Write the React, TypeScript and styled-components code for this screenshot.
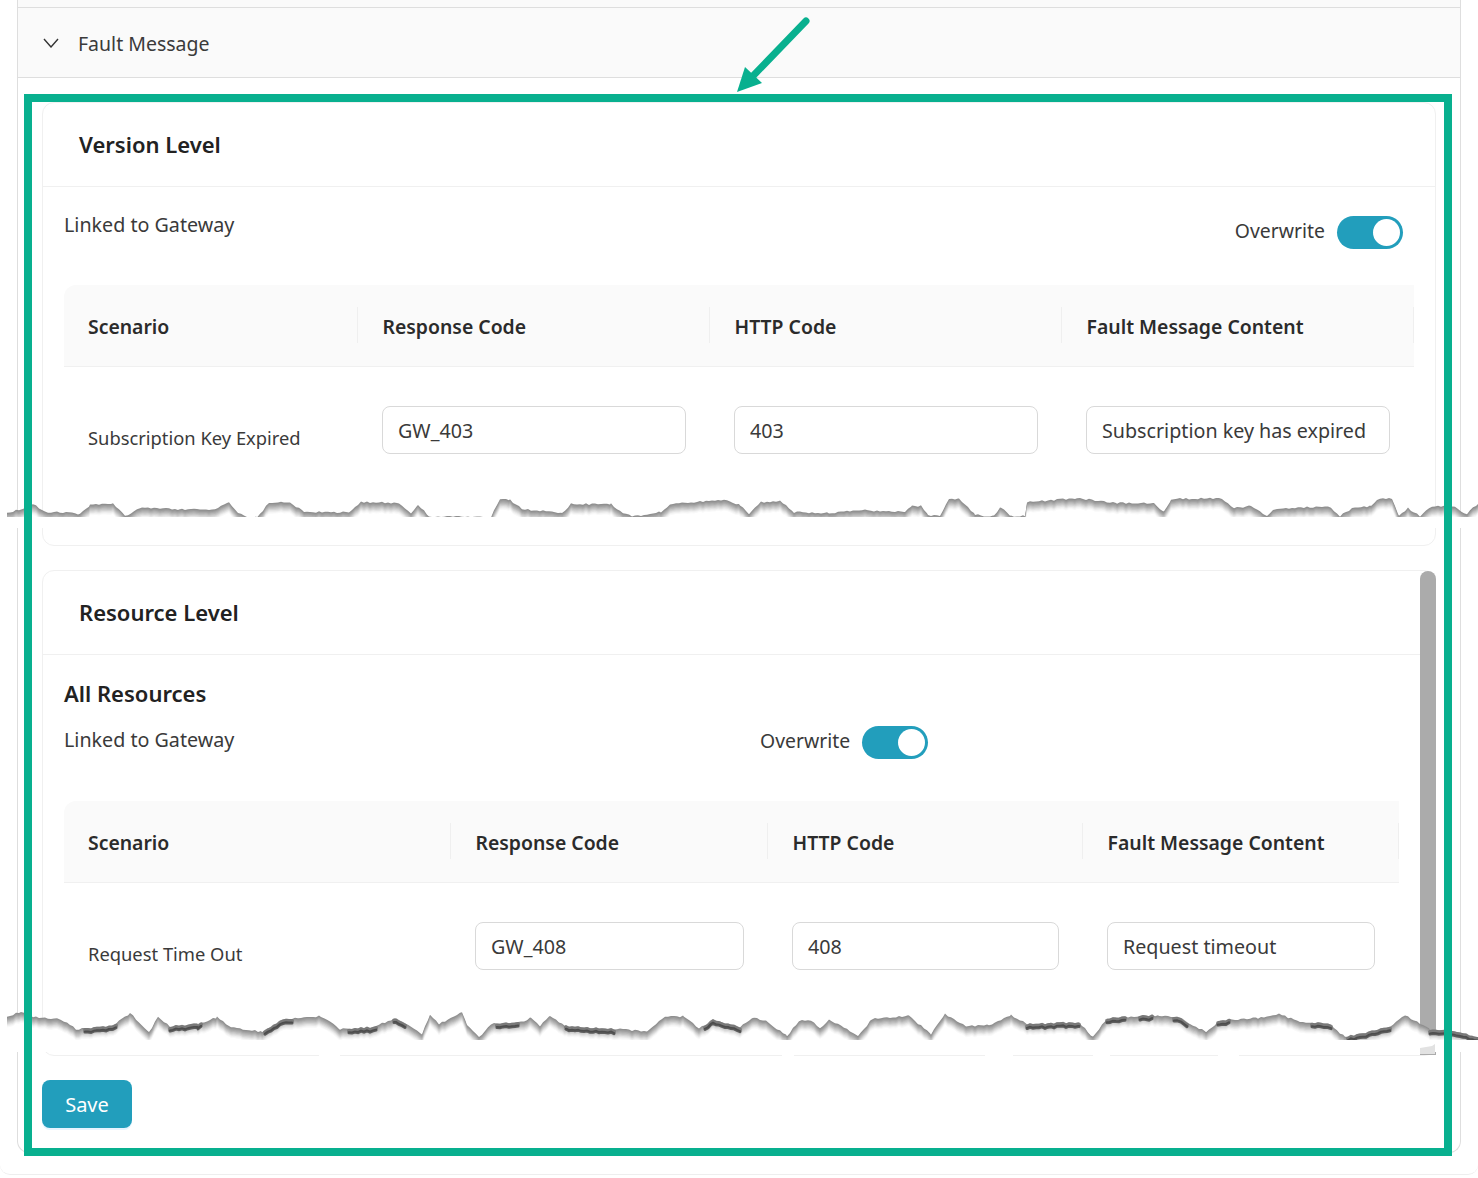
import React from 'react'
import styled, { createGlobalStyle } from 'styled-components'

const GlobalStyle = createGlobalStyle`
    html, body {
        margin: 0;
        padding: 0;
        background: #fff;
    }
    * {
        box-sizing: border-box;
    }
    body {
        font-family: "Noto Sans", "Open Sans", "Liberation Sans", sans-serif;
        color: #3a3a3a;
    }
`

const Page = styled.div`
    position: relative;
    width: 1478px;
    height: 1178px;
    overflow: hidden;
`
const Shell = styled.div`
    height: 1175px;
    border-bottom: 1px solid #eeeeee;
    border-radius: 0 0 10px 10px;
`
const Panel = styled.div`
    width: 1444px;
    height: 1153px;
    margin-left: 17px;
    border: 1px solid #dedede;
    border-top: none;
    border-radius: 0 0 12px 12px;
`
const Sliver = styled.div`
    height: 8px;
    background: #fafafa;
    border-bottom: 1px solid #dedede;
`
const CollapseHeader = styled.div`
    height: 70px;
    padding: 1px 0 0 25px;
    display: flex;
    align-items: center;
    gap: 19px;
    background: #fafafa;
    border-bottom: 1px solid #dedede;
    font-size: 19.5px;
    color: #3a3a3a;
`
const PanelBody = styled.div`
    padding: 24px 24px 0;
    display: flex;
    flex-direction: column;
    gap: 24px;
`
const Card = styled.section<{ $height: number }>`
    position: relative;
    width: 1394px;
    height: ${({ $height }) => $height}px;
    border: 1px solid #f0f0f0;
    border-radius: 12px;
    background: #fff;
`
const CardHeader = styled.div`
    height: 84px;
    padding: 0 36px 2px;
    display: flex;
    align-items: center;
    font-size: 22px;
    font-weight: 600;
    color: #222;
    border-bottom: 1px solid #f0f0f0;
`
const CardBody = styled.div<{ $paddingTop: number }>`
    padding: ${({ $paddingTop }) => $paddingTop}px 21px 0;
`
const SubTitle = styled.div`
    height: 32px;
    margin-bottom: 17px;
    display: flex;
    align-items: center;
    font-size: 22px;
    font-weight: 600;
    color: #222;
`
const LinkRow = styled.div<{ $height: number }>`
    height: ${({ $height }) => $height}px;
    display: flex;
    align-items: flex-start;
`
const LinkLabel = styled.div<{ $width?: number }>`
    width: ${({ $width }) => ($width ? `${$width}px` : 'auto')};
    font-size: 19.7px;
    line-height: 28px;
    color: #3a3a3a;
`
const Overwrite = styled.div<{ $right?: number; $top: number }>`
    display: flex;
    align-items: center;
    gap: 12px;
    margin-top: ${({ $top }) => $top}px;
    margin-left: ${({ $right }) => ($right === undefined ? '0' : 'auto')};
    margin-right: ${({ $right }) => $right ?? 0}px;
    font-size: 19.4px;
    color: #3a3a3a;
`
const OverwriteText = styled.span`
    padding-bottom: 5px;
`
const Switch = styled.div`
    width: 66px;
    height: 33px;
    padding: 3px;
    display: flex;
    justify-content: flex-end;
    border-radius: 17px;
    background: #229ebc;
`
const Knob = styled.span`
    width: 27px;
    height: 27px;
    border-radius: 50%;
    background: #fff;
`
const Grid = styled.div<{ $columns: string }>`
    display: grid;
    grid-template-columns: ${({ $columns }) => $columns};
`
const HeadCell = styled.div<{ $first?: boolean }>`
    position: relative;
    height: 82px;
    padding: 1px 0 0 24.5px;
    display: flex;
    align-items: center;
    background: #fafafa;
    border-bottom: 1px solid #f0f0f0;
    border-top-left-radius: ${({ $first }) => ($first ? '12px' : '0')};
    font-size: 19.4px;
    font-weight: 600;
    color: #2b2b2b;

    &:first-child {
        padding-left: 24px;
    }
    &:last-child {
        border-top-right-radius: 12px;
    }
    &:not(:last-child)::after {
        content: '';
        position: absolute;
        right: 0;
        top: 22px;
        height: 36px;
        width: 1px;
        background: #efefef;
    }
`
const ScenarioCell = styled.div`
    padding: 56px 24px 0;
    font-size: 18.35px;
    line-height: 30px;
    color: #3a3a3a;
`
const FieldCell = styled.div`
    padding: 39px 24px 0;
`
const Field = styled.input`
    display: block;
    width: 100%;
    height: 48px;
    padding: 1px 15px 0;
    border: 1px solid #d9d9d9;
    border-radius: 8px;
    background: #fff;
    font: inherit;
    font-size: 19.7px;
    color: #3a3a3a;
    outline: none;
`
const ScrollThumb = styled.div`
    position: absolute;
    top: 0;
    right: -1px;
    bottom: 0;
    width: 16px;
    border-radius: 8px 8px 0 0;
    background: #ababab;
`
const SaveButton = styled.button`
    width: 90px;
    height: 48px;
    border: none;
    border-radius: 8px;
    background: #229ebc;
    box-shadow: 0 2px 0 rgba(5, 145, 255, 0.1);
    font: inherit;
    font-size: 20px;
    color: #fff;
`
const Frame = styled.div`
    position: absolute;
    left: 24px;
    top: 94px;
    width: 1428px;
    height: 1062px;
    border: 8px solid #08b08f;
    pointer-events: none;
`
const Overlay = styled.svg`
    position: absolute;
    left: 0;
    top: 0;
    pointer-events: none;
`

type Pt = [number, number]

const tearOne: Pt[] = [
    [7, 513], [24, 510], [33, 505], [45, 513], [66, 513], [80, 515], [90, 506], [113, 505], [125, 517],
    [142, 508], [179, 510], [212, 511], [229, 503], [238, 514], [250, 518], [257, 518], [269, 504],
    [290, 503], [304, 513], [349, 513], [361, 503], [399, 504], [411, 515], [418, 506], [429, 517],
    [491, 518], [500, 500], [510, 501], [522, 510], [562, 514], [571, 505], [611, 505], [623, 515],
    [635, 517], [661, 513], [670, 505], [694, 503], [727, 501], [740, 506], [749, 515], [761, 503],
    [780, 502], [794, 513], [829, 514], [862, 511], [905, 513], [912, 507], [921, 507], [928, 516],
    [940, 517], [949, 500], [959, 500], [975, 515], [987, 518], [994, 517], [1001, 508], [1011, 517],
    [1025, 517], [1027, 503], [1077, 499], [1117, 504], [1154, 504], [1164, 513], [1171, 500],
    [1222, 499], [1234, 509], [1251, 507], [1267, 517], [1274, 510], [1328, 507], [1340, 517],
    [1352, 509], [1371, 507], [1380, 499], [1392, 500], [1399, 517], [1408, 509], [1420, 517],
    [1432, 507], [1455, 508], [1467, 515], [1478, 504],
]

const tearTwo: Pt[] = [
    [7, 1017], [21, 1013], [33, 1018], [61, 1020], [76, 1030], [113, 1027], [130, 1014], [149, 1033],
    [158, 1018], [170, 1027], [198, 1025], [217, 1018], [231, 1028], [262, 1033], [283, 1020],
    [321, 1017], [340, 1030], [373, 1028], [396, 1019], [422, 1035], [430, 1015], [439, 1025],
    [462, 1013], [467, 1025], [479, 1038], [491, 1025], [524, 1023], [531, 1018], [540, 1027],
    [550, 1017], [566, 1027], [614, 1030], [647, 1032], [665, 1018], [684, 1017], [699, 1029],
    [713, 1021], [740, 1028], [754, 1018], [768, 1023], [787, 1037], [799, 1022], [811, 1021],
    [820, 1030], [829, 1020], [858, 1037], [872, 1020], [909, 1017], [931, 1035], [945, 1015],
    [966, 1027], [989, 1026], [1011, 1016], [1027, 1025], [1079, 1023], [1093, 1038], [1107, 1019],
    [1159, 1016], [1178, 1018], [1206, 1033], [1220, 1021], [1258, 1019], [1279, 1015], [1300, 1023],
    [1328, 1024], [1345, 1038], [1390, 1028], [1405, 1016], [1430, 1030], [1451, 1031], [1474, 1037],
    [1478, 1037],
]

// stretches of the second tear where the shadow goes almost black
const darkStretches: [number, number][] = [
    [83, 118], [170, 203], [264, 293], [349, 378], [392, 406], [496, 519], [566, 614], [703, 740],
    [1027, 1079], [1107, 1126], [1138, 1154], [1173, 1187], [1218, 1230], [1310, 1331], [1347, 1390],
    [1430, 1478],
]

const borderGaps: [number, number][] = [[319, 340], [782, 794], [985, 1013], [1093, 1110], [1218, 1239]]

const shades = ['#8f8f8f', '#9b9b9b', '#a8a8a8', '#b6b6b6', '#c5c5c5', '#d4d4d4', '#e3e3e3', '#f0f0f0', '#f9f9f9', '#ffffff']

// add a little paper-fibre noise to the hand-picked outline
const roughen = (points: Pt[]): Pt[] => {
    const out: Pt[] = []
    points.forEach(([x, y], i) => {
        const next = points[i + 1]
        if (!next) {
            out.push([x, y])
            return
        }
        for (let px = x; px < next[0]; px += 3) {
            const t = (px - x) / (next[0] - x)
            const hash = Math.abs(Math.sin(px * 12.9898) * 43758.5453) % 1
            out.push([px, y + (next[1] - y) * t - hash * 1.8])
        }
    })
    return out
}

const shape = (points: Pt[], shift: number, bottom: number) =>
    [
        `M${points[0][0]} ${bottom}`,
        ...points.map(([x, y]) => `L${x} ${(y + shift).toFixed(1)}`),
        `L1478 ${bottom}Z`,
    ].join(' ')

const stretch = (points: Pt[], from: number, to: number, shift: number) =>
    points
        .filter(([x]) => x >= from && x <= to)
        .map(([x, y], i) => `${i ? 'L' : 'M'}${x} ${(y + shift).toFixed(1)}`)
        .join(' ')

const Tear = ({ points, floor, clear, dark }: { points: Pt[]; floor: number; clear: number; dark?: boolean }) => {
    const rough = roughen(points)
    return (
        <>
            {shades.map((fill, i) => (
                <path key={fill} d={shape(rough, i * 1.2, floor)} fill={fill} />
            ))}
            {dark && darkStretches.map(([from, to]) => (
                <g key={from} fill="none" strokeLinecap="round">
                    <path d={stretch(rough, from, to, 2)} stroke="#6e6e6e" strokeWidth="4" opacity="0.7" />
                    <path d={stretch(rough, from, to, 4)} stroke="#3c3c3c" strokeWidth="3" opacity="0.75" />
                </g>
            ))}
            <rect x="0" y={floor - 1} width="1478" height={clear - floor + 1} fill="#fff" />
        </>
    )
}

const Chevron = () => (
    <svg width="16" height="10" viewBox="0 0 16 10" fill="none" stroke="#333" strokeWidth="1.4">
        <path d="M1 1 L8 9 L15 1" />
    </svg>
)

type TableProps = {
    columns: string
    scenario: string
    code: string
    http: string
    message: string
}

const FaultTable = ({ columns, scenario, code, http, message }: TableProps) => (
    <Grid $columns={columns}>
        <HeadCell $first>Scenario</HeadCell>
        <HeadCell>Response Code</HeadCell>
        <HeadCell>HTTP Code</HeadCell>
        <HeadCell>Fault Message Content</HeadCell>
        <ScenarioCell>{scenario}</ScenarioCell>
        <FieldCell><Field readOnly defaultValue={code} /></FieldCell>
        <FieldCell><Field readOnly defaultValue={http} /></FieldCell>
        <FieldCell><Field readOnly defaultValue={message} /></FieldCell>
    </Grid>
)

const App = () => (
    <Page>
        <GlobalStyle />
        <Shell>
            <Panel>
                <Sliver />
                <CollapseHeader>
                    <Chevron />
                    Fault Message
                </CollapseHeader>
                <PanelBody>
                    <Card $height={444}>
                        <CardHeader>Version Level</CardHeader>
                        <CardBody $paddingTop={24}>
                            <LinkRow $height={74}>
                                <LinkLabel>Linked to Gateway</LinkLabel>
                                <Overwrite $right={11} $top={5}>
                                    <OverwriteText>Overwrite</OverwriteText>
                                    <Switch><Knob /></Switch>
                                </Overwrite>
                            </LinkRow>
                            <FaultTable
                                columns="294px 352px 352px 352px"
                                scenario="Subscription Key Expired"
                                code="GW_403"
                                http="403"
                                message="Subscription key has expired"
                            />
                        </CardBody>
                    </Card>
                    <Card $height={486}>
                        <CardHeader>Resource Level</CardHeader>
                        <CardBody $paddingTop={22}>
                            <SubTitle>All Resources</SubTitle>
                            <LinkRow $height={75}>
                                <LinkLabel $width={696}>Linked to Gateway</LinkLabel>
                                <Overwrite $top={0}>
                                    <OverwriteText>Overwrite</OverwriteText>
                                    <Switch><Knob /></Switch>
                                </Overwrite>
                            </LinkRow>
                            <FaultTable
                                columns="387px 317px 315px 316px"
                                scenario="Request Time Out"
                                code="GW_408"
                                http="408"
                                message="Request timeout"
                            />
                        </CardBody>
                        <ScrollThumb />
                    </Card>
                    <SaveButton>Save</SaveButton>
                </PanelBody>
            </Panel>
        </Shell>
        <Overlay width="1478" height="1178" viewBox="0 0 1478 1178">
            <Tear points={tearOne} floor={518} clear={528} />
            <Tear points={tearTwo} floor={1041} clear={1052} dark />
            <path d="M1420 1054 V1048 L1432 1046 L1435 1044 V1054Z" fill="#e2e2e2" />
            {borderGaps.map(([from, to]) => (
                <rect key={from} x={from} y="1053" width={to - from} height="3" fill="#fff" />
            ))}
        </Overlay>
        <Frame />
        <Overlay width="1478" height="1178" viewBox="0 0 1478 1178">
            <path d="M806 21 L752 77" stroke="#08b08f" strokeWidth="7" strokeLinecap="round" fill="none" />
            <path d="M737 92 L745 67 L762 83Z" fill="#08b08f" />
        </Overlay>
    </Page>
)

export default App
